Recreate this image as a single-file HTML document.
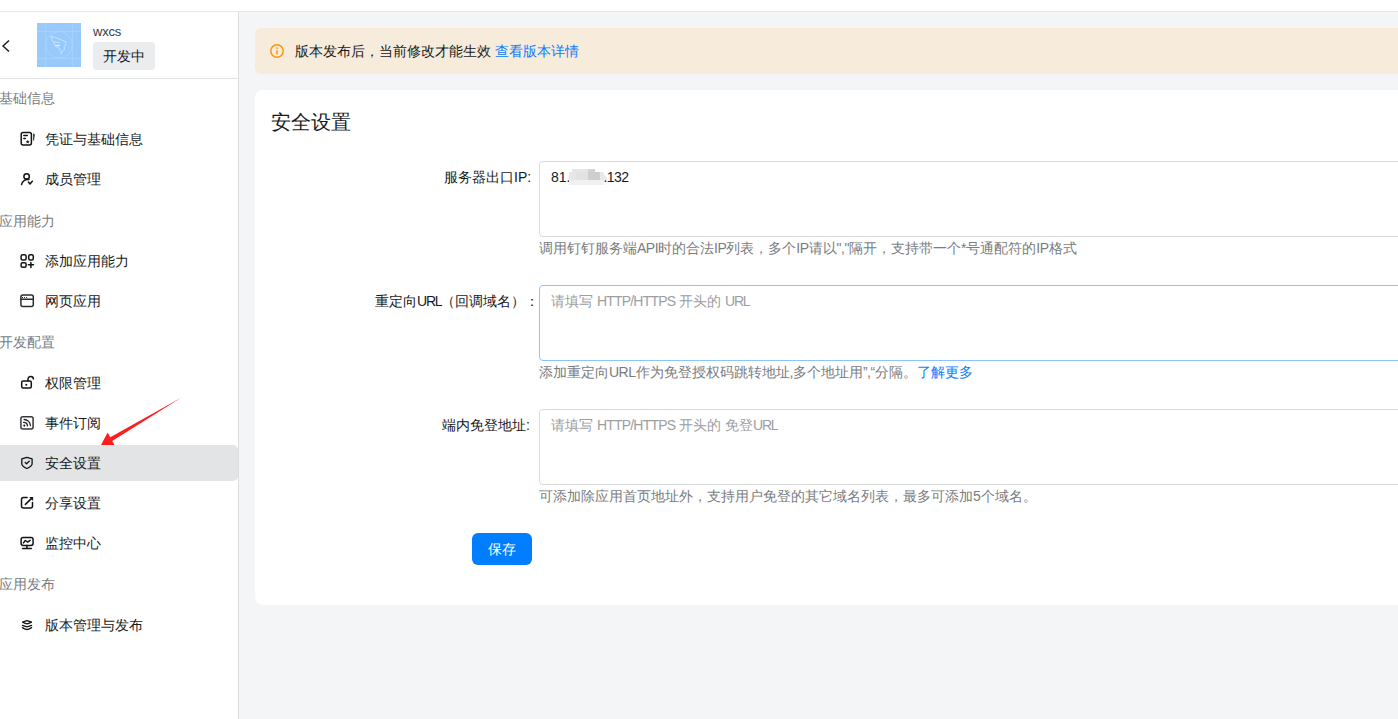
<!DOCTYPE html>
<html><head><meta charset="utf-8">
<style>
*{box-sizing:border-box;margin:0;padding:0}
html,body{width:1398px;height:719px;overflow:hidden;background:#fff;font-family:"Liberation Sans",sans-serif;font-size:14px;color:#171a1d}
.a{position:absolute}
.l{letter-spacing:-0.8px}.l2{letter-spacing:-1.2px}.l3{letter-spacing:-0.5px}
.t{position:absolute;white-space:nowrap;line-height:20px;font-size:14px}
#top{left:0;top:11px;width:1398px;height:1px;background:#e8e9eb}
#sideb{left:238px;top:12px;width:1px;height:707px;background:#dcdddf}
#main{left:239px;top:12px;width:1159px;height:707px;background:#f4f5f7}
#sheadb{left:0;top:78px;width:238px;height:1px;background:#e3e4e6}
.logo{left:37px;top:23px;width:44px;height:44px;background:#98c9fb;overflow:hidden}
.tag{left:93px;top:42px;width:62px;height:28px;border-radius:4px;background:#ebecee}
.sec{color:#7a7c80}
.ic{position:absolute;left:19px;width:16px;height:16px}
.active{left:0;top:445px;width:238px;height:36px;background:#e3e4e6;border-radius:0 5px 5px 0}
#notice{left:255px;top:28px;width:1200px;height:46px;border-radius:6px;background:#f7ebdb}
#card{left:255px;top:90px;width:1200px;height:515px;border-radius:8px;background:#fff}
.ta{left:539px;width:900px;height:76px;border:1px solid #d9dadc;border-radius:4px;background:#fff}
.ta.focus{border-color:#8cc4fb}
.help{color:#7a7c80}
.ph{color:#9c9ea1}
.btn{left:472px;top:533px;width:60px;height:32px;border-radius:6px;background:#007eff}
</style></head>
<body>
<div id="top" class="a"></div>
<div id="main" class="a"></div>
<div id="sideb" class="a"></div>
<div id="sheadb" class="a"></div>
<!-- sidebar header -->
<svg class="a" style="left:0;top:38px" width="12" height="16" viewBox="0 0 12 16"><path d="M9 2.5 L3 8 L9 13.5" fill="none" stroke="#171a1d" stroke-width="1.4"/></svg>
<div class="logo a">
  <svg width="44" height="44" viewBox="0 0 44 44">
    <g stroke="#aed6fc" stroke-width="0.7" fill="none">
      <line x1="8.7" y1="0" x2="8.7" y2="44"/><line x1="35.4" y1="0" x2="35.4" y2="44"/>
      <line x1="0" y1="8.4" x2="44" y2="8.4"/><line x1="0" y1="35.4" x2="44" y2="35.4"/>
      <circle cx="22" cy="21.8" r="13.3"/>
    </g>
    <g stroke="#c9e4fd" stroke-width="0.9" fill="none" stroke-linejoin="round" stroke-linecap="round">
      <path d="M14.3 13.3 Q22 15.5 28.8 18.8 L29 20.9 L27 23.8 L27.7 26 L25.5 28.2 L23.7 31 L24.5 28.9 L22.6 27 L22.6 25.3 L19 23.5 L17.2 20.6 L15.4 17.3 Z"/>
      <path d="M16.9 18.8 L22.6 19.7"/>
      <path d="M18.7 22.6 L22.6 22.4" stroke="#e3f1fe" stroke-width="1.1"/>
    </g>
  </svg>
</div>
<div class="t" style="left:93px;top:24px;font-size:13px;line-height:16px;color:#3a3c3f;letter-spacing:-0.2px">wxcs</div>
<div class="tag a"></div>
<div class="t" style="left:103px;top:46px">开发中</div>
<!-- sidebar menu -->
<div class="active a"></div>
<svg class="a" style="left:0;top:0" width="239" height="719" viewBox="0 0 239 719">
<g fill="none" stroke="#111315" stroke-width="1.5" stroke-linecap="round" stroke-linejoin="round">
 <!-- certificate -->
 <rect x="21.2" y="132.5" width="10.2" height="12.6" rx="2"/>
 <path d="M23.8 135.5 H27.3 M23.8 138.4 H25.4"/>
 <path d="M33.1 133.3 L34.9 134.6 L33.9 140.9 L33.1 140.3 Z" fill="#333" stroke="none"/>
 <!-- person -->
 <circle cx="26.6" cy="176.4" r="2.7"/>
 <path d="M21.5 184.6 A6.2 6.2 0 0 1 28.8 179.6"/>
 <path d="M28.4 182 L30 184 L32.3 181.2"/>
 <!-- apps -->
 <rect x="21.1" y="254.8" width="5" height="5.2" rx="1.5"/>
 <rect x="28.7" y="254.8" width="4.6" height="5.2" rx="1.5"/>
 <rect x="21.1" y="262.8" width="5" height="4.4" rx="1.5"/>
 <path d="M28.4 264.7 H33.5 M30.9 262.4 V267.5"/>
 <!-- web -->
 <rect x="20.9" y="295.1" width="12.4" height="11.4" rx="2" stroke="#2b2d30"/>
 <path d="M20.9 299.3 H33.3" stroke="#2b2d30"/>
 <!-- lock -->
 <rect x="21.7" y="381" width="9.6" height="7.1" rx="1.5"/>
 <path d="M28 381 V379.2 A2.6 2.6 0 0 1 33.4 379"/>
 <!-- rss -->
 <rect x="20.9" y="416.8" width="12.2" height="12.2" rx="2" stroke="#35373a" stroke-width="1.5"/>
 <path d="M23.6 422.4 A3.8 3.8 0 0 1 27.5 425.9 M24.1 419.5 A6.6 6.6 0 0 1 30.4 425.5" stroke="#1f2124" stroke-width="1.3"/>
 <!-- shield -->
 <path d="M26.9 457.3 L21.8 458.9 V464.2 Q22.2 466.6 26.9 468.5 Q31.6 466.6 32.1 464.2 V458.9 Z" stroke-width="1.3"/>
 <path d="M25.2 462.5 L26.5 463.7 L29.2 461.2" stroke-width="1.3"/>
 <!-- share -->
 <path d="M27.1 497.6 H23.5 Q21.5 497.6 21.5 499.6 V506.1 Q21.5 508.1 23.5 508.1 H30.5 Q32.5 508.1 32.5 506.1 V502.6"/>
 <path d="M25.4 504.4 L31.6 498.4"/>
 <!-- monitor -->
 <rect x="21.1" y="537.6" width="12" height="7.8" rx="2.2"/>
 <path d="M23.4 542.9 L25.3 540.5 L27.7 542.1 L30.1 540.4"/>
 <path d="M26.9 545.6 V548.5 M22.6 548.5 H31.3"/>
 <!-- layers -->
 <path d="M27 620.6 Q29.5 621.3 31.5 622.2 Q29.5 623.2 27 623.9 Q24.5 623.2 22.5 622.2 Q24.5 621.3 27 620.6 Z" stroke-width="1.3"/>
 <path d="M22.4 625.4 Q24.6 626.3 27 626.9 Q29.4 626.3 31.6 625.4" stroke-width="1.3"/>
 <path d="M22.4 627.6 Q24.6 629 27 629.6 Q29.4 629 31.6 627.6" stroke-width="1.3"/>
</g>
<g fill="#171a1d">
 <path d="M27.7 139.9 L28.3 141.1 L29.5 141.2 L28.6 142.2 L28.9 143.4 L27.7 142.8 L26.5 143.4 L26.8 142.2 L25.9 141.2 L27.1 141.1 Z"/>
 <circle cx="26.3" cy="384.8" r="1.05"/>
 <circle cx="24.3" cy="425.6" r="1.05"/>
 <circle cx="22.5" cy="297.5" r="0.6"/><circle cx="24.5" cy="297.5" r="0.6"/><circle cx="26.6" cy="297.5" r="0.6"/>
 <path d="M29.2 497 L33.1 497 L33.1 500.9 Z"/>
</g>
</svg>
<!-- red arrow -->
<svg class="a" style="left:0;top:0" width="239" height="445" viewBox="0 0 239 445">
 <path d="M100.5 446 L107.6 432.6 L110.3 437.3 L181.5 397.6 L112.2 440.9 L115 446 Z" fill="#fe1d1d"/>
</svg>

<div class="t sec" style="left:-1px;top:88px">基础信息</div>
<div class="t" style="left:45px;top:129px">凭证与基础信息</div>
<div class="t" style="left:45px;top:169px">成员管理</div>
<div class="t sec" style="left:-1px;top:211px">应用能力</div>
<div class="t" style="left:45px;top:251px">添加应用能力</div>
<div class="t" style="left:45px;top:291px">网页应用</div>
<div class="t sec" style="left:-1px;top:332px">开发配置</div>
<div class="t" style="left:45px;top:373px">权限管理</div>
<div class="t" style="left:45px;top:413px">事件订阅</div>
<div class="t" style="left:45px;top:453px">安全设置</div>
<div class="t" style="left:45px;top:493px">分享设置</div>
<div class="t" style="left:45px;top:533px">监控中心</div>
<div class="t sec" style="left:-1px;top:574px">应用发布</div>
<div class="t" style="left:45px;top:615px">版本管理与发布</div>
<!-- main -->
<div id="notice" class="a"></div>
<svg class="a" style="left:270px;top:44px" width="14" height="14" viewBox="0 0 14 14"><circle cx="7" cy="7" r="6.2" fill="none" stroke="#ff9200" stroke-width="1.4"/><line x1="7" y1="6.2" x2="7" y2="10.3" stroke="#ff9200" stroke-width="1.4"/><circle cx="7" cy="4.1" r="0.85" fill="#ff9200"/></svg>
<div class="t" style="left:295px;top:41px">版本发布后，当前修改才能生效 <span style="color:#0a7cff">查看版本详情</span></div>
<div id="card" class="a"></div>
<div class="t" style="left:271px;top:108px;font-size:20px;line-height:28px">安全设置</div>

<div class="t" style="left:444px;top:167px">服务器出口IP:</div>
<div class="ta a" style="top:161px"></div>
<div class="t" style="left:551px;top:167px">81.<span style="display:inline-block;width:33px"></span><span style="letter-spacing:-0.6px">.132</span></div>
<div class="a" style="left:572px;top:169px;width:16px;height:3px;background:#e6e6e6"></div>
<div class="a" style="left:588px;top:169px;width:7px;height:3px;background:#d3d3d3"></div>
<div class="a" style="left:569px;top:172px;width:7px;height:8px;background:#e7e7e7"></div>
<div class="a" style="left:576px;top:172px;width:12px;height:8px;background:#e2e2e2"></div>
<div class="a" style="left:588px;top:172px;width:12px;height:8px;background:#cecece"></div>
<div class="a" style="left:600px;top:172px;width:7px;height:8px;background:#e9e9e9;clip-path:polygon(0 0,40% 0,100% 80%,100% 100%,0 100%)"></div>
<div class="a" style="left:569px;top:180px;width:35px;height:5px;background:#f1f1f1"></div>
<div class="t help" style="left:539px;top:238px">调用钉钉服务端<span class="l3">API</span>时的合法<span class="l3">IP</span>列表，多个<span class="l3">IP</span>请以<span class="l3">","</span>隔开，支持带一个*号通配符的<span class="l3">IP</span>格式</div>

<div class="t" style="left:375px;top:291px">重定向<span class="l2">URL</span>（回调域名）：</div>
<div class="ta focus a" style="top:285px"></div>
<div class="t ph" style="left:551px;top:291px">请填写 <span class="l">HTTP/HTTPS</span> 开头的 <span class="l2">URL</span></div>
<div class="t help" style="left:539px;top:362px">添加重定向<span class="l3">URL</span>作为免登授权码跳转地址<span class="l3">,</span>多个地址用<span class="l3">”,“</span>分隔。<span style="color:#0a7cff">了解更多</span></div>

<div class="t" style="left:442px;top:415px">端内免登地址:</div>
<div class="ta a" style="top:409px"></div>
<div class="t ph" style="left:551px;top:415px">请填写 <span class="l">HTTP/HTTPS</span> 开头的 免登<span class="l2">URL</span></div>
<div class="t help" style="left:539px;top:486px">可添加除应用首页地址外，支持用户免登的其它域名列表，最多可添加5个域名。</div>

<div class="btn a"></div>
<div class="t" style="left:488px;top:539px;color:#fff">保存</div>
</body></html>
